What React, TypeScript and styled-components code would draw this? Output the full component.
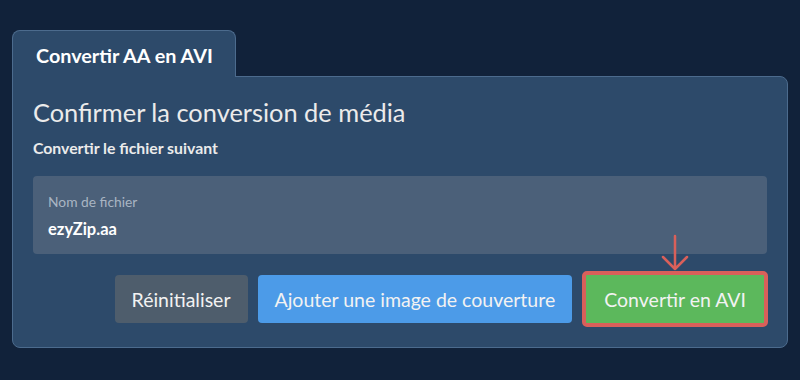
import React from "react";
import styled, { createGlobalStyle } from "styled-components";

const Global = createGlobalStyle`
  html, body { margin: 0; padding: 0; }
  body {
    background: #11223a;
    font-family: Lato, "Open Sans", sans-serif;
    color: #ebebeb;
    width: 800px;
    height: 380px;
    overflow: hidden;
  }
`;

const Page = styled.div`
  padding: 30px 12px 0 12px;
  width: 776px;
`;

const Tab = styled.div`
  position: relative;
  z-index: 1;
  width: 222px;
  height: 45px;
  box-sizing: content-box;
  background: #2d4a6a;
  border: 1px solid #4c6b8d;
  border-bottom: none;
  border-radius: 8px 8px 0 0;
  margin-bottom: -1px;
  display: flex;
  align-items: center;
  padding-bottom: 1px;
`;

const TabLabel = styled.span`
  font-size: 19.8px;
  font-weight: 700;
  color: #ffffff;
  padding-left: 23px;
  padding-top: 2px;
`;

const Panel = styled.div`
  background: #2d4a6a;
  border: 1px solid #4c6b8d;
  border-radius: 0 8px 8px 8px;
  padding: 20px 20px 20px 20px;
`;

const Heading = styled.h2`
  margin: 0;
  font-size: 25.4px;
  font-weight: 400;
  line-height: 30px;
  color: #ebebeb;
`;

const Sub = styled.p`
  margin: 12px 0 0 0;
  font-size: 15.8px;
  font-weight: 700;
  line-height: 18px;
  color: #ebebeb;
`;

const Field = styled.div`
  margin-top: 19px;
  background: #4b6079;
  border-radius: 4px;
  height: 78px;
  box-sizing: border-box;
  padding: 17px 15px 0 15px;
  display: flex;
  flex-direction: column;
`;

const FieldLabel = styled.span`
  font-size: 13.8px;
  line-height: 17px;
  color: #a9b5c3;
`;

const FieldValue = styled.span`
  margin-top: 9px;
  font-size: 16.5px;
  line-height: 20px;
  font-weight: 700;
  color: #ffffff;
`;

const Row = styled.div`
  margin-top: 17px;
  display: flex;
  justify-content: flex-end;
  align-items: center;
  gap: 10px;
  margin-right: -1px;
`;

const variants: Record<string, string> = {
  secondary: "#4e5d6c",
  info: "#4c9be8",
  success: "#5cb85c",
};

const Button = styled.button<{ $variant: string; $highlight?: boolean }>`
  position: relative;
  font-family: Lato, "Open Sans", sans-serif;
  font-size: 19.5px;
  font-weight: 400;
  color: #f2f2f2;
  background: ${(p) => variants[p.$variant]};
  border: ${(p) => (p.$highlight ? "4px solid #d9605a" : "none")};
  border-radius: ${(p) => (p.$highlight ? "5px" : "4px")};
  height: ${(p) => (p.$highlight ? "56px" : "48px")};
  padding: 0 ${(p) => (p.$highlight ? "18px" : "17px")};
  cursor: pointer;
  white-space: nowrap;
`;

const Arrow = styled.svg`
  position: absolute;
  left: 50%;
  bottom: calc(100% + 4px);
  transform: translateX(-50%);
  overflow: visible;
`;

export default function App() {
  return (
    <>
      <Global />
      <Page>
        <Tab>
          <TabLabel>Convertir AA en AVI</TabLabel>
        </Tab>
        <Panel>
          <Heading>Confirmer la conversion de média</Heading>
          <Sub>Convertir le fichier suivant</Sub>
          <Field>
            <FieldLabel>Nom de fichier</FieldLabel>
            <FieldValue>ezyZip.aa</FieldValue>
          </Field>
          <Row>
            <Button $variant="secondary">Réinitialiser</Button>
            <Button $variant="info">Ajouter une image de couverture</Button>
            <Button $variant="success" $highlight>
              <Arrow width="28" height="36" viewBox="0 0 28 36">
                <path
                  d="M14 1 V34 M2 22 L14 34 L26 22"
                  fill="none"
                  stroke="#d9605a"
                  strokeWidth="2.5"
                  strokeLinecap="round"
                  strokeLinejoin="round"
                />
              </Arrow>
              Convertir en AVI
            </Button>
          </Row>
        </Panel>
      </Page>
    </>
  );
}
